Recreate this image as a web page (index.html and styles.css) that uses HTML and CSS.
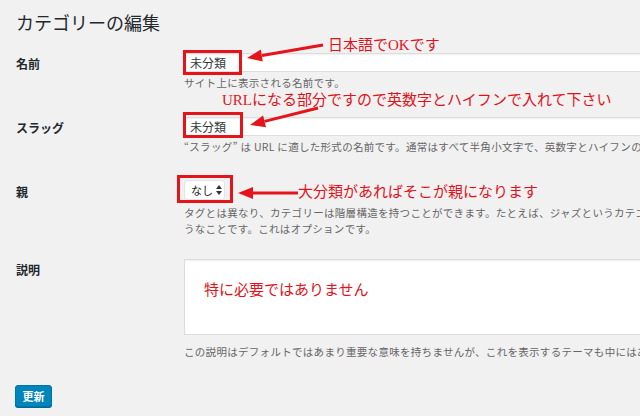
FILE: index.html
```html
<!DOCTYPE html>
<html lang="ja">
<head>
    <meta charset="UTF-8" />
    <title>カテゴリーの編集</title>
    <link rel="stylesheet" href="styles.css">
</head>
<body>
    <div class="wrap">
        <h1>カテゴリーの編集</h1>

        <div class="row row-name">
            <div class="label">名前</div>
            <div class="field">
                <div class="input">未分類</div>
                <p class="help">サイト上に表示される名前です。</p>
            </div>
        </div>

        <div class="row row-slug">
            <div class="label">スラッグ</div>
            <div class="field">
                <div class="input">未分類</div>
                <p class="help">“スラッグ” は URL に適した形式の名前です。通常はすべて半角小文字で、英数字とハイフンのみが使われます。</p>
            </div>
        </div>

        <div class="row row-parent">
            <div class="label">親</div>
            <div class="field">
                <div class="select"><span>なし</span><svg width="6" height="10" viewBox="0 0 6 10"><polygon points="3,0 6,4 0,4" fill="#333"/><polygon points="0,6 6,6 3,10" fill="#333"/></svg></div>
                <p class="help help-parent">タグとは異なり、カテゴリーは階層構造を持つことができます。たとえば、ジャズというカテゴリーの下にビバップやビッグバンドという子カテゴリーを作る、といったよ<br>うなことです。これはオプションです。</p>
            </div>
        </div>

        <div class="row row-desc">
            <div class="label">説明</div>
            <div class="field">
                <div class="textarea"></div>
                <p class="help help-desc">この説明はデフォルトではあまり重要な意味を持ちませんが、これを表示するテーマも中にはあります。</p>
            </div>
        </div>

        <div class="button">更新</div>
    </div>

    <!-- 注釈 -->
    <svg class="marks" width="640" height="416" viewBox="0 0 640 416">
        <g fill="none" stroke="#e5141b" stroke-width="3">
            <rect x="184.5" y="51.5" width="56" height="22"/>
            <rect x="184.5" y="113.5" width="57" height="23"/>
            <rect x="178.5" y="176.5" width="53" height="25"/>
            <line x1="323" y1="45" x2="262" y2="55.5"/>
            <line x1="318" y1="108" x2="264.5" y2="121.4"/>
            <line x1="298" y1="193" x2="252" y2="193"/>
        </g>
        <g fill="#e5141b">
            <polygon points="247,58 260.8,49.6 262.8,61.4"/>
            <polygon points="250,125 263.1,115.5 266,127.2"/>
            <polygon points="238,193 253,187 253,199"/>
        </g>
    </svg>
    <div class="note note1">日本語でOKです</div>
    <div class="note note2">URLになる部分ですので英数字とハイフンで入れて下さい</div>
    <div class="note note3">大分類があればそこが親になります</div>
    <div class="note note4">特に必要ではありません</div>
</body>
</html>
```

FILE: styles.css
```css
*{
    margin:0;
    padding:0;
    box-sizing:border-box;
}
body{
    width:640px;
    height:416px;
    overflow:hidden;
    background:#f1f1f1;
    color:#23282d;
    font-family:"Noto Sans CJK JP", sans-serif;
    position:relative;
}
.wrap{
    padding:10px 0 0 16px;
    white-space:nowrap;
}
h1{
    font-size:18px;
    font-weight:400;
    line-height:24px;
    color:#23282d;
}
.row{
    display:flex;
}
.label{
    width:168px;
    flex:none;
    font-size:12px;
    font-weight:bold;
    line-height:18px;
    padding-top:2px;
}
.field{
    width:600px;
    flex:none;
}
.row-name{ margin-top:19px; }
.row-slug{ margin-top:26px; }
.row-parent{ margin-top:26px; }
.row-desc{ margin-top:22px; }

.input{
    height:19px;
    background:#fff;
    border:1px solid #ddd;
    box-shadow:inset 0 1px 2px rgba(0,0,0,.07);
    font-size:12px;
    line-height:17px;
    padding-left:5px;
    color:#32373c;
}
.help{
    margin-top:3px;
    font-size:10.5px;
    line-height:16px;
    color:#666;
    letter-spacing:0.3px;
}
.select{
    display:flex;
    align-items:center;
    gap:3px;
    height:18px;
    width:39px;
    margin-left:1px;
    padding-left:6px;
    background:#fff;
    border-radius:3px;
    box-shadow:0 0 0 1px #e4e4e4;
    font-size:11px;
    line-height:18px;
    color:#222;
}
.help-parent{ margin-top:6px; }
.textarea{
    height:76px;
    background:#fff;
    border:1px solid #ddd;
    box-shadow:inset 0 1px 2px rgba(0,0,0,.07);
}
.help-desc{ margin-top:9px; }
.button{
    margin-top:25px;
    margin-left:-1px;
    width:37px;
    height:22px;
    background:#0085ba;
    border:1px solid #0073aa;
    border-radius:3px;
    box-shadow:0 1px 0 #006799;
    color:#fff;
    font-size:11px;
    font-weight:bold;
    line-height:20px;
    text-align:center;
}

.marks{
    position:absolute;
    left:0;
    top:0;
    pointer-events:none;
}
.note{
    position:absolute;
    font-family:"Liberation Serif", "Noto Sans CJK JP", serif;
    font-size:15px;
    line-height:20px;
    color:#e2121b;
    white-space:nowrap;
}
.note1{ left:328px; top:35px; }
.note2{ left:222px; top:90px; }
.note3{ left:298px; top:182px; }
.note4{ left:204px; top:280px; }
```
